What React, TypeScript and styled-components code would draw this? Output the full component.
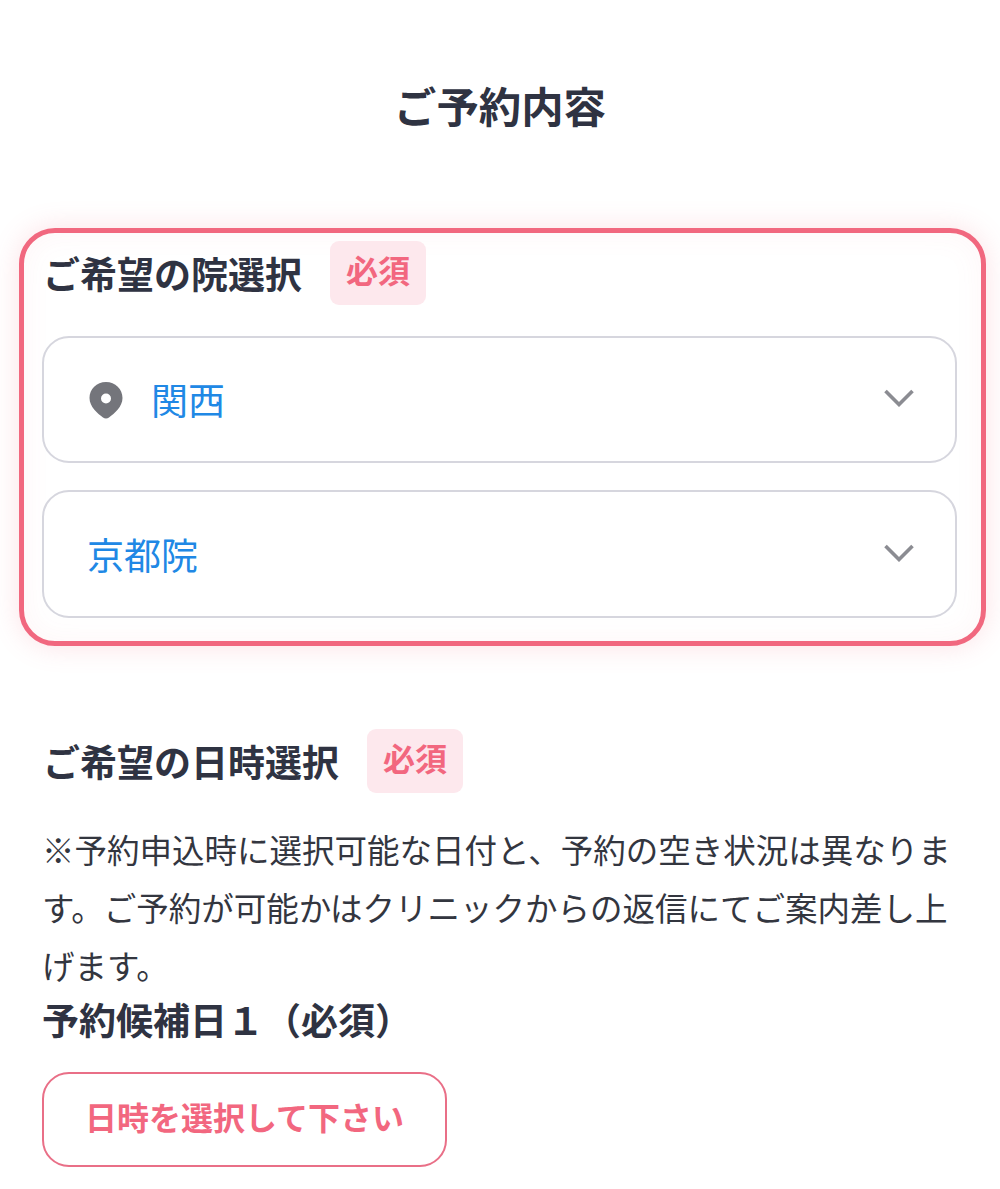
import React from "react";
import styled, { createGlobalStyle } from "styled-components";

const Global = createGlobalStyle`
  html, body { margin: 0; padding: 0; background: #fff; }
  body { font-family: "Noto Sans CJK JP", "Noto Sans", sans-serif; color: #2f3342; }
`;

const Page = styled.div`
  width: 1000px;
  height: 1189px;
  overflow: hidden;
  box-sizing: border-box;
  padding-top: 74px;
`;

const Title = styled.h1`
  margin: 0;
  height: 62px;
  line-height: 62px;
  font-size: 42.4px;
  font-weight: 700;
  text-align: center;
`;

const Card = styled.section`
  box-sizing: border-box;
  width: 967px;
  height: 418px;
  margin: 92px 0 0 19px;
  padding: 8px 24px 0 18px;
  border: 5px solid #f1687f;
  border-radius: 36px;
  background: #fff;
  box-shadow: 0 0 28px rgba(242, 103, 127, 0.2), inset 0 0 30px rgba(242, 103, 127, 0.06);
`;

const LabelRow = styled.div`
  display: flex;
  align-items: center;
  height: 64px;
  gap: 28px;
`;

const Label = styled.h2`
  margin: 0;
  padding-left: 1px;
  font-size: 37px;
  line-height: 64px;
  font-weight: 700;
  white-space: nowrap;
`;

const Badge = styled.span`
  display: flex;
  align-items: center;
  justify-content: center;
  box-sizing: border-box;
  width: 96px;
  height: 64px;
  padding-bottom: 9px;
  border-radius: 9px;
  background: #fde8ed;
  color: #f2677f;
  font-size: 32px;
  font-weight: 700;
  line-height: 1;
`;

const SelectBox = styled.div`
  box-sizing: border-box;
  display: flex;
  align-items: center;
  width: 915px;
  height: ${(p) => p.$height}px;
  margin-top: ${(p) => p.$top}px;
  padding: 0 41px 0 44px;
  border: 2.5px solid #d6d6de;
  border-radius: 27px;
  background: #fff;
`;

const SelectText = styled.span`
  flex: 1;
  color: #2088e5;
  font-size: 37px;
  font-weight: 400;
  line-height: 1;
  margin-left: -1px;
`;

const Pin = styled.svg`
  width: 36px;
  height: 38px;
  margin-right: 28px;
  flex: none;
`;

const Chevron = styled.svg`
  width: 30px;
  height: 18px;
  margin-bottom: 3px;
  flex: none;
`;

const Section = styled.section`
  padding: 83px 42px 0 42px;
`;

const BodyText = styled.p`
  margin: 27px 0 0;
  width: 912px;
  font-size: 32.5px;
  line-height: 58px;
  color: #33363f;
  font-weight: 400;
`;

const SubLabel = styled.h3`
  margin: 1px 0 0;
  font-size: 37px;
  line-height: 48px;
  font-weight: 700;
  white-space: pre;
`;

const PickButton = styled.button`
  display: block;
  box-sizing: border-box;
  width: 405px;
  height: 95px;
  margin: 29px 0 0;
  padding: 0 0 8px;
  border: 2.5px solid #e96f87;
  border-radius: 27px;
  background: #fff;
  color: #f2677f;
  font-family: inherit;
  font-size: 32px;
  font-weight: 700;
`;

const Caret = () => (
  <Chevron viewBox="0 0 30 18" aria-hidden="true">
    <path d="M1.500 2 L15 15.500 L28.500 2" fill="none" stroke="#8b8c92" strokeWidth="3.6" />
  </Chevron>
);

export default function App() {
  return (
    <Page>
      <Global />
      <Title>ご予約内容</Title>
      <Card>
        <LabelRow>
          <Label>ご希望の院選択</Label>
          <Badge>必須</Badge>
        </LabelRow>
        <SelectBox $top={31} $height={127}>
          <Pin viewBox="0 0 36 38" aria-hidden="true">
            <path
              fillRule="evenodd"
              fill="#74757b"
              d="M18 1C8.600 1 1.500 8 1.500 17c0 8.600 8 15.500 13.500 19.500 1.800 1.300 4.200 1.300 6 0C26.500 32.500 34.500 25.600 34.500 17 34.500 8 27.400 1 18 1Zm0 11.500a5 5 0 1 1 0 10 5 5 0 0 1 0-10Z"
            />
          </Pin>
          <SelectText>関西</SelectText>
          <Caret />
        </SelectBox>
        <SelectBox $top={27} $height={128}>
          <SelectText>京都院</SelectText>
          <Caret />
        </SelectBox>
      </Card>
      <Section>
        <LabelRow>
          <Label>ご希望の日時選択</Label>
          <Badge>必須</Badge>
        </LabelRow>
        <BodyText>
          ※予約申込時に選択可能な日付と、予約の空き状況は異なります。ご予約が可能かはクリニックからの返信にてご案内差し上げます。
        </BodyText>
        <SubLabel>予約候補日１（必須）</SubLabel>
        <PickButton>日時を選択して下さい</PickButton>
      </Section>
    </Page>
  );
}
